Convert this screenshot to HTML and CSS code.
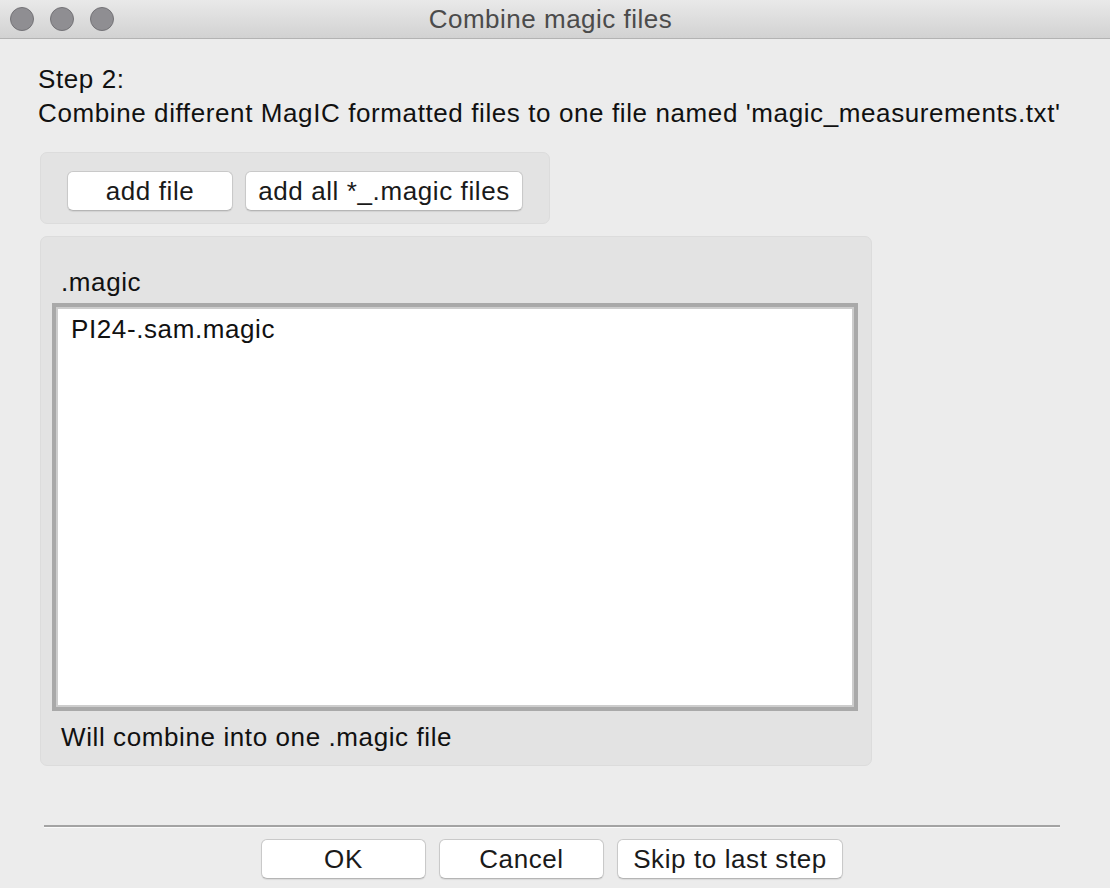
FILE: index.html
```html
<!DOCTYPE html>
<html>
<head>
<meta charset="utf-8">
<title>Combine magic files</title>
<link rel="stylesheet" href="styles.css">
</head>
<body>
<div class="window">
  <div class="titlebar">
    <div class="lights">
      <span class="light"></span>
      <span class="light"></span>
      <span class="light"></span>
    </div>
    <div class="title">Combine magic files</div>
  </div>
  <div class="content">
    <div class="intro">
      <div>Step 2:</div>
      <div>Combine different MagIC formatted files to one file named 'magic_measurements.txt'</div>
    </div>
    <div class="panel toolbar">
      <button class="btn btn-add">add file</button>
      <button class="btn btn-addall">add all *_.magic files</button>
    </div>
    <div class="panel listpanel">
      <div class="label">.magic</div>
      <div class="listbox">
        <div class="item">PI24-.sam.magic</div>
      </div>
      <div class="label note">Will combine into one .magic file</div>
    </div>
  </div>
  <div class="footer">
    <div class="separator"></div>
    <div class="actions">
      <button class="btn btn-foot">OK</button>
      <button class="btn btn-foot">Cancel</button>
      <button class="btn btn-skip">Skip to last step</button>
    </div>
  </div>
</div>
</body>
</html>
```
FILE: styles.css
```css
html, body {
  margin: 0;
  padding: 0;
  background: #ececec;
}
body {
  width: 1110px;
  height: 888px;
  overflow: hidden;
  font-family: "Liberation Sans", Arial, sans-serif;
  font-size: 26px;
  letter-spacing: 0.6px;
  color: #1a1a1a;
}
.window {
  width: 1110px;
  height: 888px;
  display: flex;
  flex-direction: column;
  background: #ececec;
}
.titlebar {
  height: 38px;
  border-bottom: 1px solid #b3b3b3;
  background: linear-gradient(#e9e9e9, #d2d2d2);
  display: flex;
  align-items: center;
  position: relative;
}
.lights {
  display: flex;
  gap: 16px;
  padding-left: 10px;
}
.light {
  width: 22px;
  height: 22px;
  border-radius: 50%;
  background: #8f8e92;
  border: 1px solid #747377;
}
.title {
  position: absolute;
  left: 0;
  right: 0;
  top: 0;
  line-height: 38px;
  text-align: center;
  color: #4b4b4b;
  font-size: 26px;
  letter-spacing: 0.5px;
  padding-right: 9px;
}
.content {
  padding: 0 0 0 40px;
  flex: 1;
}
.intro {
  padding-top: 23px;
  margin-left: -2px;
  line-height: 34px;
  color: #111;
}
.panel {
  background: #e3e3e3;
  border: 1px solid #dcdcdc;
  border-radius: 7px;
  box-sizing: border-box;
}
.toolbar {
  margin-top: 22px;
  width: 510px;
  height: 72px;
  display: flex;
  gap: 12px;
  padding: 18px 0 0 26px;
}
.btn {
  font-family: "Liberation Sans", Arial, sans-serif;
  font-size: 26px;
  letter-spacing: 0.6px;
  color: #1a1a1a;
  background: #ffffff;
  border: 1px solid #c9c9c9;
  border-bottom-color: #b5b5b5;
  border-radius: 6px;
  box-shadow: 0 1px 1px rgba(0,0,0,0.08);
  height: 40px;
  padding: 0;
  line-height: 38px;
  box-sizing: border-box;
}
.btn-add {
  width: 166px;
}
.btn-addall {
  width: 278px;
}
.listpanel {
  margin-top: 12px;
  width: 832px;
  height: 530px;
  padding: 28px 0 0 11px;
  display: flex;
  flex-direction: column;
}
.label {
  padding-left: 9px;
  line-height: 34px;
  color: #111;
}
.listbox {
  margin-top: 4px;
  width: 806px;
  height: 408px;
  box-sizing: border-box;
  background: #fff;
  border: 4px solid #a9a9a9;
  box-shadow: inset 0 0 0 2px #cdcdcd;
  padding: 6px 0 0 15px;
}
.item {
  line-height: 32px;
  color: #111;
}
.note {
  margin-top: 9px;
}
.footer {
  padding-bottom: 9px;
}
.separator {
  margin: 0 50px 0 44px;
  height: 2px;
  background: #a3a3a3;
  border-bottom: 1px solid #fafafa;
}
.actions {
  margin-top: 11px;
  display: flex;
  justify-content: center;
  gap: 13px;
  padding-right: 6px;
}
.btn-foot {
  width: 165px;
}
.btn-skip {
  width: 226px;
}
```
